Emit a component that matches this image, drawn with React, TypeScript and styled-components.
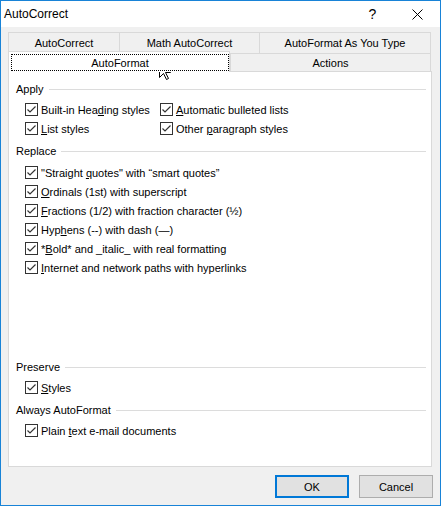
import React from 'react';
import styled, { createGlobalStyle } from 'styled-components';

const GlobalStyle = createGlobalStyle({
  'html, body': {
    margin: 0,
    padding: 0,
    background: '#ffffff',
  },
  body: {
    fontFamily: '"Liberation Sans", Arial, sans-serif',
    fontSize: 11,
    color: '#000000',
  },
});

const Window = styled.div({
  position: 'relative',
  width: 441,
  height: 506,
  boxSizing: 'border-box',
  border: '1px solid #1883d7',
  display: 'flex',
  flexDirection: 'column',
  background: '#f0f0f0',
  overflow: 'hidden',
});

const TitleBar = styled.div({
  height: 26,
  display: 'flex',
  alignItems: 'center',
  background: '#ffffff',
  paddingLeft: 3,
});

const Title = styled.div({
  flex: 1,
  fontSize: 12,
  lineHeight: '26px',
});

const CaptionButton = styled.div({
  width: 45,
  height: 26,
  display: 'flex',
  alignItems: 'center',
  justifyContent: 'center',
  fontSize: 14,
  color: '#000000',
});

const Body = styled.div({
  flex: 1,
  display: 'flex',
  flexDirection: 'column',
  padding: '5px 8px 0 7px',
});

const TabRow = styled.div({
  display: 'flex',
  height: 21,
});

const TabRowFront = styled.div({
  display: 'flex',
  alignItems: 'flex-end',
  height: 18,
});

const Tab = styled.div<{ $w: number; $last?: boolean }>((p) => ({
  width: p.$w,
  boxSizing: 'border-box',
  height: '100%',
  borderTop: '1px solid #d9d9d9',
  borderLeft: '1px solid #d9d9d9',
  borderRight: p.$last ? '1px solid #d9d9d9' : 'none',
  background: '#f0f0f0',
  display: 'flex',
  alignItems: 'center',
  justifyContent: 'center',
}));

const ActiveTab = styled.div({
  position: 'relative',
  zIndex: 1,
  width: 222,
  height: 21,
  marginBottom: -1,
  boxSizing: 'border-box',
  border: '1px solid #d9d9d9',
  borderBottom: 'none',
  background: '#ffffff',
  display: 'flex',
  flexDirection: 'column',
});

const FocusRect = styled.div({
  margin: '2px 0 1px 2px',
  flex: 1,
  border: '1px dotted #000000',
  display: 'flex',
  alignItems: 'center',
  justifyContent: 'center',
});

const Panel = styled.div({
  height: 396,
  boxSizing: 'border-box',
  border: '1px solid #d9d9d9',
  background: '#ffffff',
  padding: '9px 5px 0 7px',
  display: 'flex',
  flexDirection: 'column',
});

const Heading = styled.div<{ $gap?: number; $after?: number }>((p) => ({
  display: 'flex',
  alignItems: 'center',
  height: 16,
  lineHeight: '16px',
  marginTop: p.$gap ?? 0,
  marginBottom: p.$after ?? 3,
  '&::after': {
    content: '""',
    flex: 1,
    height: 1,
    marginLeft: 5,
    background: '#dcdcdc',
  },
}));

const Grid = styled.div({
  display: 'grid',
  gridTemplateColumns: '135px auto',
  marginLeft: 9,
});

const List = styled.div({
  display: 'flex',
  flexDirection: 'column',
  marginLeft: 9,
});

const Row = styled.div({
  display: 'flex',
  alignItems: 'center',
  height: 19,
  gap: 3,
  whiteSpace: 'nowrap',
});

const Box = styled.span({
  width: 13,
  height: 13,
  boxSizing: 'border-box',
  border: '1px solid #333333',
  background: '#ffffff',
  display: 'flex',
  flexShrink: 0,
});

const Key = styled.span({
  textDecoration: 'underline',
  textUnderlineOffset: 1,
});

const Footer = styled.div({
  display: 'flex',
  justifyContent: 'flex-end',
  gap: 10,
  marginTop: 8,
  marginRight: -1,
});

const Button = styled.div<{ $primary?: boolean }>((p) => ({
  width: 74,
  height: 23,
  boxSizing: 'border-box',
  border: p.$primary ? '2px solid #0078d7' : '1px solid #adadad',
  background: '#e1e1e1',
  display: 'flex',
  alignItems: 'center',
  justifyContent: 'center',
}));

const Cursor = styled.svg({
  position: 'absolute',
  left: 158,
  top: 60,
});

function Check({ children }: { children: React.ReactNode }) {
  return (
    <Row>
      <Box>
        <svg width="11" height="11" viewBox="0 0 11 11">
          <polyline points="1.5,5.5 4,8 9.5,2.5" fill="none" stroke="#333333" strokeWidth="1.2" />
        </svg>
      </Box>
      <span>{children}</span>
    </Row>
  );
}

export default function App() {
  return (
    <>
      <GlobalStyle />
      <Window>
        <TitleBar>
          <Title>AutoCorrect</Title>
          <CaptionButton>?</CaptionButton>
          <CaptionButton>
            <svg width="11" height="11" viewBox="0 0 11 11">
              <path d="M0.5 0.5 L10.5 10.5 M10.5 0.5 L0.5 10.5" stroke="#000000" strokeWidth="1" />
            </svg>
          </CaptionButton>
        </TitleBar>
        <Body>
          <TabRow>
            <Tab $w={111}>AutoCorrect</Tab>
            <Tab $w={140}>Math AutoCorrect</Tab>
            <Tab $w={172} $last>AutoFormat As You Type</Tab>
          </TabRow>
          <TabRowFront>
            <ActiveTab>
              <FocusRect>AutoFormat</FocusRect>
            </ActiveTab>
            <Tab $w={201} $last>Actions</Tab>
          </TabRowFront>
          <Panel>
            <Heading>Apply</Heading>
            <Grid>
              <Check>Built-in Hea<Key>d</Key>ing styles</Check>
              <Check><Key>A</Key>utomatic bulleted lists</Check>
              <Check><Key>L</Key>ist styles</Check>
              <Check>Other <Key>p</Key>aragraph styles</Check>
            </Grid>
            <Heading $gap={5} $after={4}>Replace</Heading>
            <List>
              <Check>"Straight <Key>q</Key>uotes" with “smart quotes”</Check>
              <Check><Key>O</Key>rdinals (1st) with superscript</Check>
              <Check><Key>F</Key>ractions (1/2) with fraction character (½)</Check>
              <Check>Hyp<Key>h</Key>ens (--) with dash (—)</Check>
              <Check>*<Key>B</Key>old* and _italic_ with real formatting</Check>
              <Check><Key>I</Key>nternet and network paths with hyperlinks</Check>
            </List>
            <Heading $gap={82}>Preserve</Heading>
            <List>
              <Check><Key>S</Key>tyles</Check>
            </List>
            <Heading $gap={5}>Always AutoFormat</Heading>
            <List>
              <Check>Plain <Key>t</Key>ext e-mail documents</Check>
            </List>
          </Panel>
          <Footer>
            <Button $primary>OK</Button>
            <Button>Cancel</Button>
          </Footer>
        </Body>
        <Cursor width="13" height="20" viewBox="0 0 13 20">
          <path
            d="M0.5 0.5 L0.5 16.5 L4.5 12.5 L7.5 18.5 L9.5 17.5 L6.5 11.5 L11.5 11.5 Z"
            fill="#ffffff"
            stroke="#000000"
            strokeWidth="1"
          />
        </Cursor>
      </Window>
    </>
  );
}
